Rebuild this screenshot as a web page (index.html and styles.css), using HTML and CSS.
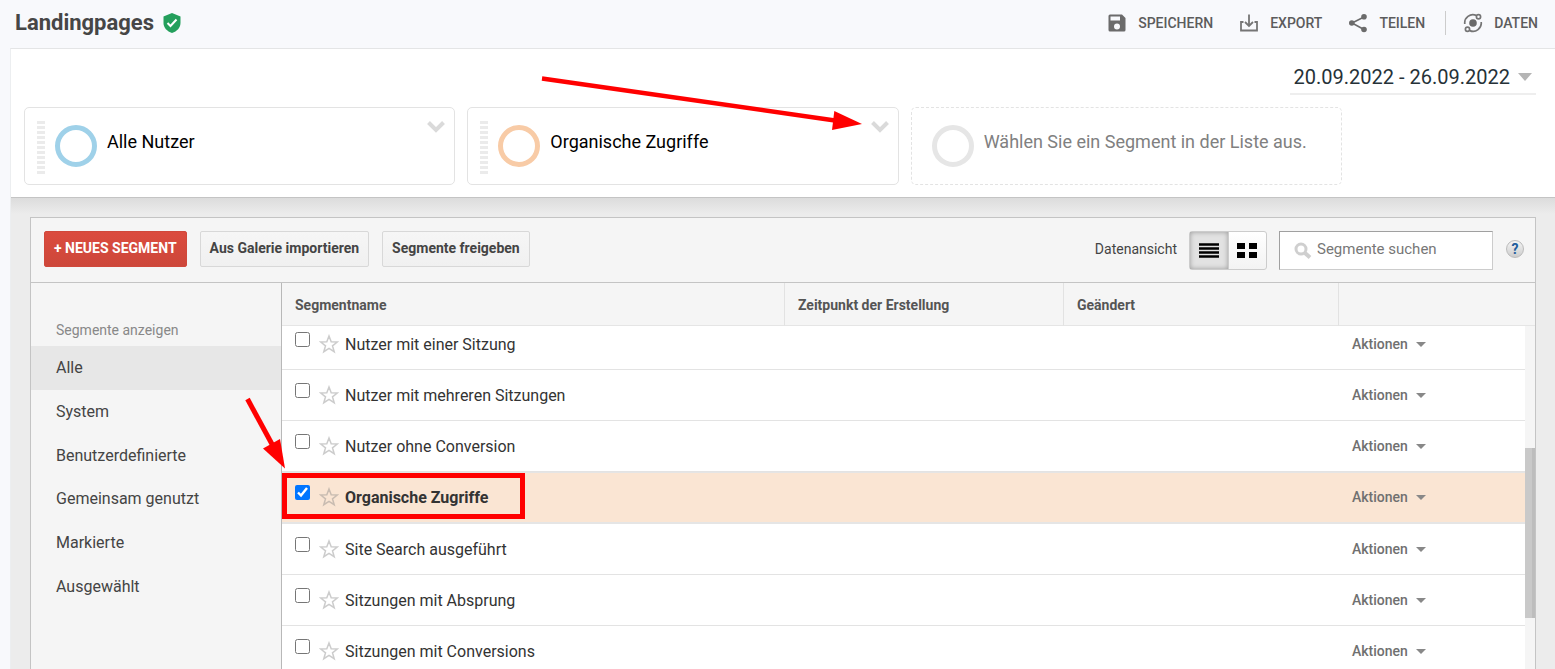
FILE: index.html
```html
<!DOCTYPE html>
<html lang="de">
<head>
<meta charset="utf-8">
<title>Landingpages</title>
<link rel="stylesheet" href="styles.css">
</head>
<body>
<header class="topbar">
  <h1 class="title">Landingpages</h1>
  <svg class="shield" width="18" height="22" viewBox="0 0 18 22"><path fill="#249f5c" d="M9 1l8.500 3.500V11c0 4.500-3.500 8.500-8.500 10C4 19.500.5 15.500.5 11V4.500z"/><path d="M4.500 11l3 3 6-6.500" fill="none" stroke="#fff" stroke-width="2"/></svg>
  <nav class="actions">
    <button class="action"><svg width="20" height="20" viewBox="0 0 20 20"><path fill="#6b6b6b" fill-rule="evenodd" d="M3 1.500h12l3.500 3.500v12a1.500 1.500 0 0 1-1.500 1.500H3A1.500 1.500 0 0 1 1.500 17V3A1.500 1.500 0 0 1 3 1.500zM3.500 3.500v4h9.500v-4zM10 10.500a3 3 0 1 0 0 6 3 3 0 0 0 0-6z"/></svg>SPEICHERN</button>
    <button class="action"><svg width="20" height="20" viewBox="0 0 20 20" fill="none" stroke="#757575" stroke-width="1.800"><path d="M4.500 9H2v8.500h16V9h-2.500M10 1.500v11M6 9l4 4 4-4"/></svg>EXPORT</button>
    <button class="action"><svg width="20" height="20" viewBox="0 0 20 20"><path d="M16 4L4 10l12 6.500" fill="none" stroke="#6b6b6b" stroke-width="1.600"/><g fill="#6b6b6b"><circle cx="16" cy="3.800" r="2.800"/><circle cx="3.800" cy="10" r="2.800"/><circle cx="16" cy="16.500" r="2.800"/></g></svg>TEILEN</button>
    <span class="rule"></span>
    <button class="action"><svg width="20" height="20" viewBox="0 0 20 20" fill="none" stroke="#757575" stroke-width="1.700"><circle cx="10" cy="10" r="3.800" fill="#6b6b6b" stroke="none"/><path d="M1.800 11A8.200 8.200 0 0 1 13.200 2.400M18.200 9A8.200 8.200 0 0 1 6.800 17.600"/><circle cx="15.500" cy="3.700" r="2.100"/><circle cx="4.500" cy="16.300" r="2.100"/></svg>DATEN</button>
  </nav>
</header>

<main class="main">
  <section class="picker">
    <button class="date">20.09.2022 - 26.09.2022<svg width="14" height="8" viewBox="0 0 14 8"><path fill="#b5b5b5" d="M0 0h14L7 8z"/></svg></button>
    <div class="cards">
      <div class="card">
        <span class="grip"></span><span class="ring blue"></span><span class="card-name">Alle Nutzer</span>
        <button class="more" aria-label="Optionen"><svg width="18" height="12" viewBox="0 0 18 12"><path d="M1.500 1.500L9 9l7.500-7.500" fill="none" stroke="#dadada" stroke-width="4"/></svg></button>
      </div>
      <div class="card">
        <span class="grip"></span><span class="ring orange"></span><span class="card-name">Organische Zugriffe</span>
        <button class="more" aria-label="Optionen"><svg width="18" height="12" viewBox="0 0 18 12"><path d="M1.500 1.500L9 9l7.500-7.500" fill="none" stroke="#dadada" stroke-width="4"/></svg></button>
      </div>
      <div class="card empty">
        <span class="ring grey"></span><span class="card-name">Wählen Sie ein Segment in der Liste aus.</span>
      </div>
    </div>
  </section>

  <section class="stage">
    <div class="panel">
      <div class="toolbar">
        <button class="btn primary">+ NEUES SEGMENT</button>
        <button class="btn">Aus Galerie importieren</button>
        <button class="btn">Segmente freigeben</button>
        <div class="tools">
          <span class="view-label">Datenansicht</span>
          <div class="toggle">
            <button class="view on" aria-label="Liste"><svg width="20" height="16" viewBox="0 0 20 16"><path d="M0 1.500h20M0 5.500h20M0 9.500h20M0 13.500h20" stroke="#000" stroke-width="2.400"/></svg></button>
            <button class="view" aria-label="Kacheln"><svg width="20" height="16" viewBox="0 0 20 16"><path d="M0 0h8v6H0zM12 0h8v6h-8zM0 9h8v6H0zM12 9h8v6h-8z"/></svg></button>
          </div>
          <label class="search">
            <svg width="18" height="18" viewBox="0 0 18 18" fill="none" stroke="#cfcfcf"><circle cx="7" cy="7" r="5" stroke-width="3"/><path d="M11 11l5 4.500" stroke-width="4"/></svg>
            <input type="text" placeholder="Segmente suchen" aria-label="Segmente suchen">
          </label>
          <button class="help">?</button>
        </div>
      </div>
      <div class="split">
        <aside class="side">
          <div class="side-title">Segmente anzeigen</div>
          <nav class="side-list">
            <a class="side-item current" href="#">Alle</a>
            <a class="side-item" href="#">System</a>
            <a class="side-item" href="#">Benutzerdefinierte</a>
            <a class="side-item" href="#">Gemeinsam genutzt</a>
            <a class="side-item" href="#">Markierte</a>
            <a class="side-item" href="#">Ausgewählt</a>
          </nav>
        </aside>
        <div class="list">
          <table class="segments">
            <colgroup><col class="c-name"><col class="c-made"><col class="c-changed"><col></colgroup>
            <thead><tr><th>Segmentname</th><th>Zeitpunkt der Erstellung</th><th>Geändert</th><th></th></tr></thead>
            <tbody>
              <tr class="cut"><td><div class="seg"><input type="checkbox" id="s1"><button class="star" aria-label="Markieren"><svg width="20" height="20" viewBox="0 0 20 20"><path d="M10 2l2.200 5.700 6.100.3-4.800 3.800 1.700 5.900L10 14.400l-5.200 3.300 1.700-5.900L1.700 8l6.100-.3z"/></svg></button><label for="s1">Nutzer mit einer Sitzung</label></div></td><td></td><td></td><td><button class="menu">Aktionen</button></td></tr>
              <tr><td><div class="seg"><input type="checkbox" id="s2"><button class="star" aria-label="Markieren"><svg width="20" height="20" viewBox="0 0 20 20"><path d="M10 2l2.200 5.700 6.100.3-4.800 3.800 1.700 5.900L10 14.400l-5.200 3.300 1.700-5.900L1.700 8l6.100-.3z"/></svg></button><label for="s2">Nutzer mit mehreren Sitzungen</label></div></td><td></td><td></td><td><button class="menu">Aktionen</button></td></tr>
              <tr><td><div class="seg"><input type="checkbox" id="s3"><button class="star" aria-label="Markieren"><svg width="20" height="20" viewBox="0 0 20 20"><path d="M10 2l2.200 5.700 6.100.3-4.800 3.800 1.700 5.900L10 14.400l-5.200 3.300 1.700-5.900L1.700 8l6.100-.3z"/></svg></button><label for="s3">Nutzer ohne Conversion</label></div></td><td></td><td></td><td><button class="menu">Aktionen</button></td></tr>
              <tr class="picked"><td><div class="seg"><input type="checkbox" id="s4" checked><button class="star" aria-label="Markieren"><svg width="20" height="20" viewBox="0 0 20 20"><path d="M10 2l2.200 5.700 6.100.3-4.800 3.800 1.700 5.900L10 14.400l-5.200 3.300 1.700-5.900L1.700 8l6.100-.3z"/></svg></button><label for="s4">Organische Zugriffe</label></div></td><td></td><td></td><td><button class="menu">Aktionen</button></td></tr>
              <tr><td><div class="seg"><input type="checkbox" id="s5"><button class="star" aria-label="Markieren"><svg width="20" height="20" viewBox="0 0 20 20"><path d="M10 2l2.200 5.700 6.100.3-4.800 3.800 1.700 5.900L10 14.400l-5.200 3.300 1.700-5.900L1.700 8l6.100-.3z"/></svg></button><label for="s5">Site Search ausgeführt</label></div></td><td></td><td></td><td><button class="menu">Aktionen</button></td></tr>
              <tr><td><div class="seg"><input type="checkbox" id="s6"><button class="star" aria-label="Markieren"><svg width="20" height="20" viewBox="0 0 20 20"><path d="M10 2l2.200 5.700 6.100.3-4.800 3.800 1.700 5.900L10 14.400l-5.200 3.300 1.700-5.900L1.700 8l6.100-.3z"/></svg></button><label for="s6">Sitzungen mit Absprung</label></div></td><td></td><td></td><td><button class="menu">Aktionen</button></td></tr>
              <tr><td><div class="seg"><input type="checkbox" id="s7"><button class="star" aria-label="Markieren"><svg width="20" height="20" viewBox="0 0 20 20"><path d="M10 2l2.200 5.700 6.100.3-4.800 3.800 1.700 5.900L10 14.400l-5.200 3.300 1.700-5.900L1.700 8l6.100-.3z"/></svg></button><label for="s7">Sitzungen mit Conversions</label></div></td><td></td><td></td><td><button class="menu">Aktionen</button></td></tr>
            </tbody>
          </table>
          <div class="track"><div class="thumb"></div></div>
        </div>
      </div>
    </div>
  </section>
</main>

<svg class="marks" width="1555" height="669" viewBox="0 0 1555 669">
  <g fill="#f00" stroke="none"><path d="M862 124l-30 6 2.300-19z"/><path d="M285 468.500L263 448.500l17-9.500z"/></g>
  <g fill="none" stroke="#f00"><path d="M542 78.500L835 120.500" stroke-width="4.500"/><path d="M247.500 399L273 446" stroke-width="5"/><rect x="284.500" y="475.500" width="238" height="41" stroke-width="5"/></g>
</svg>
</body>
</html>
```
FILE: styles.css
```css
* { box-sizing: border-box; }
html, body { height: 100%; }
body {
  margin: 0;
  display: flex;
  flex-direction: column;
  overflow: hidden;
  position: relative;
  background: #f8f9fc;
  color: #444;
  font-family: Roboto, "Liberation Sans", sans-serif;
  font-size: 14px;
}
button { font: inherit; color: inherit; background: none; border: 0; padding: 0; }
svg { display: block; flex: none; }

.topbar { display: flex; align-items: center; height: 48px; flex: none; padding: 0 17px 2px 15px; }
.title { margin: 0 9px 0 0; font-size: 22px; line-height: 28px; font-weight: 700; color: #464646; }
.actions { margin-left: auto; display: flex; align-items: center; gap: 26px; }
.action { display: flex; align-items: center; gap: 11px; font-weight: 500; line-height: 20px; color: #5c5c5c; }
.rule { width: 1px; height: 24px; background: #ccc; margin: 0 -9px 0 -6px; }

.main { margin-left: 10px; flex: 1 0 auto; display: flex; flex-direction: column; border-top: 1px solid #e4e5e6; border-left: 1px solid #eceef0; background: #ececec; }
.picker { background: #fff; border-bottom: 1px solid #c4c4c4; padding: 12px 19px 12px 13px; display: flex; flex-direction: column; }
.date { align-self: flex-end; display: flex; align-items: center; gap: 8px; padding: 4px; border-bottom: 2px solid #eee; font-size: 20px; line-height: 24px; color: #263238; }
.cards { display: grid; grid-template-columns: repeat(3, 1fr); gap: 12px; max-width: 1318px; margin-top: 12px; }
.card { display: flex; height: 78px; padding: 13px 9px 9px 12px; border: 1px solid #e3e3e3; border-radius: 5px; color: #000; font-size: 18px; }
.grip { width: 8px; height: 53px; background: repeating-linear-gradient(#ebebeb 0 3px, #fff 3px 5px); }
.ring { width: 42px; height: 42px; margin: 4px 10px 0; border: 5px solid; border-radius: 50%; flex: none; }
.blue { border-color: #9fd1e9; }
.orange { border-color: #f8cba6; }
.grey { border-color: #e6e6e6; margin-left: 8px; }
.card-name { line-height: 24px; margin-top: 9px; }
.more { margin-left: auto; align-self: flex-start; }
.empty { border-style: dashed; color: #808080; }

.stage { flex: 1; padding: 19px 19px 0 19px; background: linear-gradient(#dcdcdc, #ececec 16px); display: flex; }
.panel { flex: 1; border: 1px solid #c4c4c4; border-bottom: 0; background: #f5f5f5; display: flex; flex-direction: column; }
.toolbar { display: flex; align-items: flex-start; gap: 13px; padding: 13px 11px 12px 13px; border-bottom: 1px solid #c4c4c4; }
.btn { height: 36px; padding: 0 9px 2px; border: 1px solid #d8d8d8; border-radius: 2px; background: linear-gradient(#f6f6f6, #f0f0f0); font-weight: 700; color: #444; }
.primary { border-color: #d0483b; background: linear-gradient(#db4b3e, #cd473a); color: #fff; }
.tools { margin-left: auto; display: flex; align-items: center; gap: 12px; }
.view-label { padding-bottom: 3px; }
.toggle { display: flex; width: 78px; height: 39px; border: 1px solid #ccc; border-radius: 3px; background: linear-gradient(#fff, #f3f3f3); }
.view { flex: 1; display: flex; align-items: center; justify-content: center; }
.on { background: #e2e2e2; box-shadow: inset 0 0 5px #999; border-right: 1px solid #ccc; }
.search { display: flex; align-items: center; gap: 5px; width: 214px; height: 39px; padding: 0 12px 0 14px; background: #fff; border: 1px solid #ccc; border-top-color: #a0a0a0; border-left-color: #a0a0a0; }
.search input { flex: 1; min-width: 0; border: 0; padding: 0 0 4px; outline: 0; background: none; font: inherit; font-size: 15px; color: #444; }
.search input::placeholder { color: #777; }
.help { width: 18px; height: 18px; margin: 0 0 3px 1px; border: 1px solid #bbb; border-radius: 50%; background: linear-gradient(#f4f4f4, #ccc); color: #1d5c9c; font-weight: 700; line-height: 16px; }

.split { flex: 1; display: flex; }
.side { width: 250px; flex: none; padding-top: 35px; }
.side-title { padding-left: 25px; line-height: 24px; margin-bottom: 4px; color: #888; }
.side-list { display: grid; grid-auto-rows: 1fr; height: 262px; }
.side-item { display: flex; align-items: center; padding-left: 25px; font-size: 16px; color: #444; text-decoration: none; }
.current { background: #e7e7e7; }

.list { flex: 1; position: relative; border-left: 1px solid #b8b8b8; }
.segments { width: 100%; table-layout: fixed; border-collapse: separate; border-spacing: 0; background: #fff; }
.c-name { width: 503px; }
.c-made { width: 279px; }
.c-changed { width: 275px; }
th { height: 43px; padding: 2px 13px 0; text-align: left; background: #f5f5f5; border-bottom: 1px solid #e5e5e5; border-right: 1px solid #e2e2e2; color: #555; font-weight: 700; }
th:last-child { border-right: 0; }
td { padding: 13px; border-bottom: 1px solid #e3e3e3; }
.cut td { padding-top: 6px; }
.picked td { background: #fae5d3; border-top: 1px solid #e5e5e5; border-bottom: 2px solid #e5e5e5; padding-top: 12px; }
.seg { display: flex; align-items: center; height: 24px; font-size: 16px; line-height: 24px; color: #333; }
.seg input { width: 15px; height: 15px; margin: 0 9px 10px 0; }
.seg label { padding: 2px 0 0 6px; }
.star { padding-bottom: 1px; }
.star path { fill: none; stroke: #808080; stroke-opacity: .4; stroke-width: 1.5; }
.picked label { font-weight: 700; }
.menu { display: flex; align-items: center; gap: 8px; line-height: 24px; font-weight: 500; color: #707070; }
.menu::after { content: ""; border: 5px solid transparent; border-top-color: #888; border-bottom: 0; }
.track { position: absolute; top: 43px; right: 0; bottom: 0; width: 10px; background: #f5f5f5; }
.thumb { height: 170px; margin-top: 122px; background: #c9c9c9; border-right: 3px solid #bdbdbd; }

.marks { position: absolute; top: 0; left: 0; pointer-events: none; }
```
